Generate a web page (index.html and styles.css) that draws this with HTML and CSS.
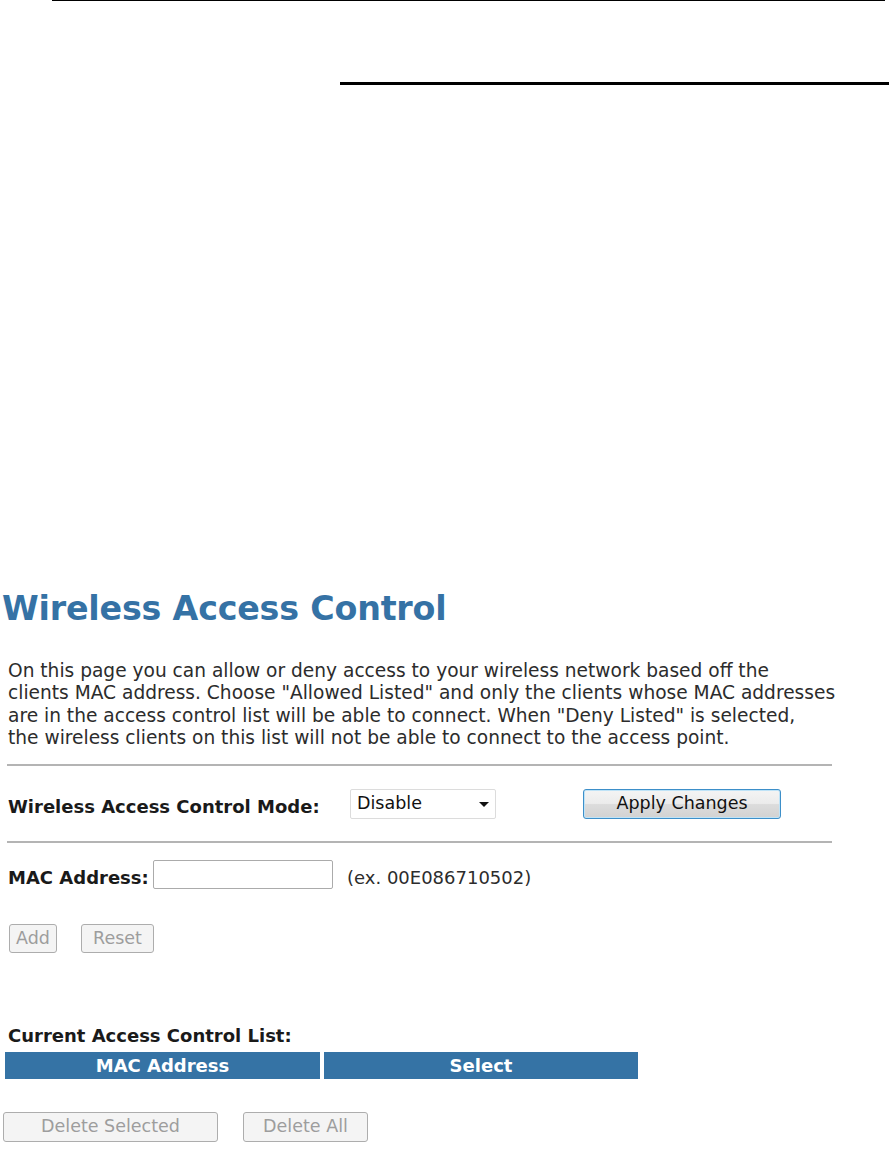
FILE: index.html
```html
<!DOCTYPE html>
<html>
<head>
<meta charset="utf-8">
<title>Wireless Access Control</title>
<link rel="stylesheet" href="styles.css">
</head>
<body>
<div class="rule-top"></div>
<div class="rule-thick"></div>

<div class="page">
  <h1 class="title">Wireless Access Control</h1>
  <p class="intro">On this page you can allow or deny access to your wireless network based off the<br>clients MAC address. Choose "Allowed Listed" and only the clients whose MAC addresses<br>are in the access control list will be able to connect. When "Deny Listed" is selected,<br>the wireless clients on this list will not be able to connect to the access point.</p>

  <div class="sep"></div>

  <div class="mode-row">
    <span class="label mode-label">Wireless Access Control Mode:</span>
    <div class="select-wrap">
      <select class="select">
        <option>Disable</option>
        <option>Allowed Listed</option>
        <option>Deny Listed</option>
      </select>
    </div>
    <button class="btn-apply">Apply Changes</button>
  </div>

  <div class="sep sep-2"></div>

  <div class="mac-row">
    <span class="label mac-label">MAC Address:</span>
    <input class="mac-input" type="text">
    <span class="hint">(ex. 00E086710502)</span>
  </div>

  <div class="btn-row">
    <button class="btn btn-add" disabled>Add</button>
    <button class="btn btn-reset" disabled>Reset</button>
  </div>

  <div class="label list-title">Current Access Control List:</div>
  <div class="list-head">
    <div class="head-cell cell-mac">MAC Address</div>
    <div class="head-cell cell-sel">Select</div>
  </div>

  <div class="btn-row del-row">
    <button class="btn btn-del-sel" disabled>Delete Selected</button>
    <button class="btn btn-del-all" disabled>Delete All</button>
  </div>
</div>
</body>
</html>
```
FILE: styles.css
```css
html, body {
  margin: 0;
  padding: 0;
  background: #ffffff;
}
body {
  font-family: "DejaVu Sans", Verdana, sans-serif;
  color: #2a2a2a;
  width: 889px;
  overflow: hidden;
}
.rule-top {
  margin-left: 52px;
  width: 833px;
  height: 1px;
  background: #000;
}
.rule-thick {
  margin-top: 81px;
  margin-left: 340px;
  width: 549px;
  height: 3px;
  background: #000;
}
.page {
  padding-top: 504px;
}
.title {
  margin: 0 0 0 2px;
  font-size: 33.3px;
  line-height: 40px;
  font-weight: bold;
  color: #3572a5;
  letter-spacing: -0.2px;
}
.intro {
  margin: 31px 0 0 8px;
  font-size: 18.6px;
  line-height: 22.3px;
  color: #2c2c2c;
}
.sep {
  margin: 15px 0 0 7px;
  width: 825px;
  height: 2px;
  background: #b4b4b4;
}
.label {
  font-size: 18px;
  font-weight: bold;
  color: #1a1a1a;
}
.mode-row {
  display: flex;
  align-items: flex-start;
  margin-top: 23px;
  height: 30px;
}
.mode-label {
  width: 350px;
  padding-left: 8px;
  padding-top: 3px;
  line-height: 30px;
  box-sizing: border-box;
  height: 30px;
  flex: none;
}
.select-wrap {
  position: relative;
  width: 146px;
  height: 30px;
  flex: none;
}
.select-wrap::after {
  content: "";
  position: absolute;
  right: 7px;
  top: 13px;
  border-left: 5px solid transparent;
  border-right: 5px solid transparent;
  border-top: 5px solid #111;
}
.select {
  -webkit-appearance: none;
  appearance: none;
  width: 146px;
  height: 30px;
  box-sizing: border-box;
  border: 1px solid #dcdcdc;
  border-radius: 2px;
  background: #fff;
  font-family: "DejaVu Sans", Verdana, sans-serif;
  font-size: 17.5px;
  color: #111;
  padding: 0 0 2px 6px;
  margin: 0;
}
.btn-apply {
  margin-left: 87px;
  width: 198px;
  height: 30px;
  box-sizing: border-box;
  border: 1px solid #3d8fc9;
  border-radius: 3px;
  box-shadow: inset 0 0 0 1px #bfe3f7;
  background: linear-gradient(#f4f4f4 0%, #ececec 48%, #dcdcdc 52%, #d2d2d2 100%);
  font-family: "DejaVu Sans", Verdana, sans-serif;
  font-size: 17.5px;
  color: #111;
  padding: 0 0 2px 0;
}
.sep-2 {
  margin-top: 22px;
}
.mac-row {
  display: flex;
  align-items: flex-start;
  margin-top: 17px;
  height: 29px;
}
.mac-label {
  padding-left: 8px;
  padding-top: 3px;
  line-height: 29px;
  height: 29px;
  box-sizing: border-box;
  width: 153px;
  flex: none;
}
.mac-input {
  width: 180px;
  height: 29px;
  box-sizing: border-box;
  border: 1px solid #ababab;
  border-radius: 2px;
  margin: 0;
  padding: 0 4px;
  font-size: 17px;
  flex: none;
}
.hint {
  margin-left: 14px;
  font-size: 18px;
  line-height: 29px;
  padding-top: 3px;
  color: #2c2c2c;
}
.btn-row {
  display: flex;
  gap: 24px;
  margin-top: 35px;
  padding-left: 9px;
}
.btn {
  height: 29px;
  box-sizing: border-box;
  border: 1px solid #adadad;
  border-radius: 3px;
  background: #f4f4f4;
  color: #9d9d9d;
  font-family: "DejaVu Sans", Verdana, sans-serif;
  font-size: 17.5px;
  padding: 0 0 2px 0;
  margin: 0;
}
.btn-add { width: 48px; }
.btn-reset { width: 73px; }
.list-title {
  margin-top: 72px;
  padding-left: 8px;
  line-height: 22px;
}
.list-head {
  display: flex;
  gap: 4px;
  margin-top: 5px;
  padding-left: 5px;
}
.head-cell {
  height: 27px;
  line-height: 27px;
  background: #3573a5;
  color: #fff;
  font-size: 18px;
  font-weight: bold;
  text-align: center;
}
.cell-mac { width: 315px; }
.cell-sel { width: 314px; }
.del-row {
  margin-top: 33px;
  padding-left: 3px;
  gap: 25px;
}
.del-row .btn { height: 30px; }
.btn-del-sel { width: 215px; }
.btn-del-all { width: 125px; }
```
